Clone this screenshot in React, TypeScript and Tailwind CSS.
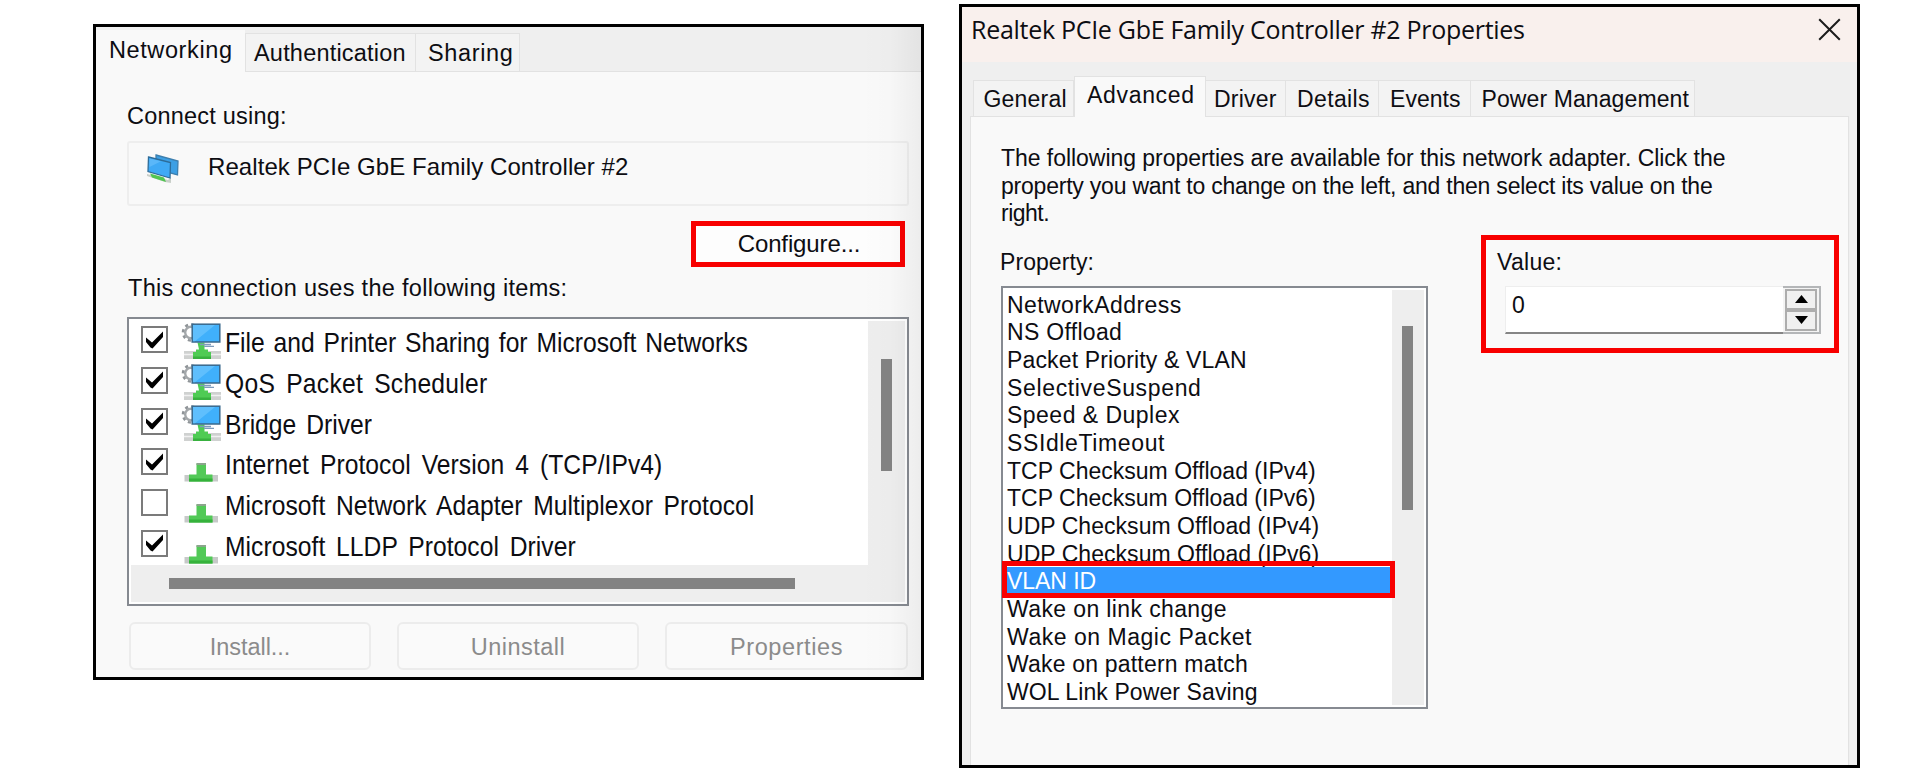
import type { ReactNode } from "react";

const items = [
  { label: "File and Printer Sharing for Microsoft Networks", checked: true, client: true, spacing: "[word-spacing:2.3px]" },
  { label: "QoS Packet Scheduler", checked: true, client: true, spacing: "tracking-[0.3px] [word-spacing:4.5px]" },
  { label: "Bridge Driver", checked: true, client: true, spacing: "[word-spacing:3.6px]" },
  { label: "Internet Protocol Version 4 (TCP/IPv4)", checked: true, client: false, spacing: "tracking-[0.05px] [word-spacing:4.7px]" },
  { label: "Microsoft Network Adapter Multiplexor Protocol", checked: false, client: false, spacing: "tracking-[0.05px] [word-spacing:4.3px]" },
  { label: "Microsoft LLDP Protocol Driver", checked: true, client: false, spacing: "tracking-[0.05px] [word-spacing:4.4px]" },
];

const properties = [
  { name: "NetworkAddress", tracking: "tracking-[0.42px]" },
  { name: "NS Offload", tracking: "tracking-[0.3px]" },
  { name: "Packet Priority & VLAN", tracking: "tracking-[0.15px]" },
  { name: "SelectiveSuspend", tracking: "tracking-[0.65px]" },
  { name: "Speed & Duplex", tracking: "tracking-[0.48px]" },
  { name: "SSIdleTimeout", tracking: "tracking-[0.62px]" },
  { name: "TCP Checksum Offload (IPv4)", tracking: "tracking-[0.01px]" },
  { name: "TCP Checksum Offload (IPv6)", tracking: "tracking-[0.01px]" },
  { name: "UDP Checksum Offload (IPv4)", tracking: "tracking-[0.04px]" },
  { name: "UDP Checksum Offload (IPv6)", tracking: "tracking-[0.04px]" },
  { name: "VLAN ID", tracking: "tracking-[-0.06px]" },
  { name: "Wake on link change", tracking: "tracking-[0.38px]" },
  { name: "Wake on Magic Packet", tracking: "tracking-[0.53px]" },
  { name: "Wake on pattern match", tracking: "tracking-[0.19px]" },
  { name: "WOL Link Power Saving", tracking: "tracking-[0.1px]" },
];

function AdapterIcon() {
  return (
    <svg width="34" height="30" viewBox="0 0 34 30" className="mt-px shrink-0">
      <path d="M10 1 L32 7 L31.500 21 L10 15Z" fill="#3c9fe4" stroke="#3d7fae" strokeWidth="1.300" />
      <path d="M1 20 L22 26 L25 23 L25 29 L19 28 L1 22Z" fill="#c9cfc9" />
      <path d="M4 19.500 L18 23.500 L20 28 L6 23.500Z" fill="#52c552" />
      <path d="M2.500 3 L24.500 8.500 L24 24 L2 17.500Z" fill="#3fa9f5" stroke="#2d6c99" strokeWidth="1.300" />
      <path d="M3.500 4.500 L15 7.300 L3.500 13Z" fill="#6cc2fb" opacity=".6" />
    </svg>
  );
}

function ClientIcon() {
  return (
    <svg width="40" height="37" viewBox="0 0 40 37" className="shrink-0">
      <g fill="none" stroke="#8f9498">
        <circle cx="10" cy="9.500" r="5.800" strokeWidth="2.400" stroke="#a4a8ab" />
        <circle cx="10" cy="9.500" r="8" strokeWidth="2.600" strokeDasharray="3.100 3.180" />
      </g>
      <rect x="3" y="28" width="37" height="8" fill="#cfd1d0" />
      <path d="M3 31.500H40" stroke="#f1f1f1" strokeWidth="1.500" />
      <path d="M16.500 19.500H23.500V26.500H27V29H30V36H12V29H15V26.500H18Z" fill="#4fcb54" />
      <path d="M12 33.500H30V36H12Z" fill="#38b13f" />
      <path d="M19 21.500H30M23 23.300H33" stroke="#7f9cbc" strokeWidth="1.300" />
      <rect x="11.200" y="1.200" width="27.600" height="17.800" fill="#40b0fb" stroke="#39688c" strokeWidth="1.500" />
      <path d="M12 2H34L14 18.200H12Z" fill="#6cc6fd" opacity=".7" />
    </svg>
  );
}

function ProtocolIcon() {
  return (
    <svg width="40" height="37" viewBox="0 0 40 37" className="shrink-0">
      <rect x="3.500" y="30" width="33.500" height="6.500" fill="#c6c9c8" />
      <path d="M15.500 18.500H25V29.500H31.500V36.500H8V29.500H15.500Z" fill="#52c957" />
      <path d="M8 33.500H31.500V36.500H8Z" fill="#35b23b" />
      <path d="M15.500 18H25V20H15.500Z" fill="#8ba58c" />
    </svg>
  );
}

function Checkbox({ checked }: { checked: boolean }) {
  return (
    <span className="mt-[7px] flex size-[27px] shrink-0 items-center justify-center border-2 border-[#7b7b7b] bg-white">
      {checked && (
        <svg width="19" height="18" viewBox="0 0 19 18">
          <path d="M1 6.500L7 11.500L18 0.500V6L7.500 17.500L5.500 16.500L1 11Z" fill="#000" />
        </svg>
      )}
    </span>
  );
}

function FooterButton({ children, className }: { children: ReactNode; className: string }) {
  return (
    <button className={"h-[48px] rounded-[6px] border-2 border-[#ececec] bg-[#fafafa] pt-[3px] text-[23.5px] text-[#8b8b8b] " + className}>
      {children}
    </button>
  );
}

function NetworkingWindow() {
  return (
    <section className="relative mt-6 ml-[93px] flex h-[656px] w-[831px] shrink-0 flex-col border-[3px] border-black bg-[#f9f9f9]">
      <div className="flex h-[45px] shrink-0 items-end bg-[#efefef] text-[23.5px]">
        <div className="h-[42px] w-[149px] shrink-0 bg-[#f9f9f9] pl-[13px] leading-[41px] tracking-[0.6px]">Networking</div>
        <div className="h-[39px] w-[171px] shrink-0 border border-[#e2e2e2] bg-[#f3f3f3] pl-2 leading-[39px] tracking-[0.2px]">Authentication</div>
        <div className="h-[39px] w-[104px] shrink-0 border border-l-0 border-[#e2e2e2] bg-[#f3f3f3] pl-3 leading-[39px] tracking-[0.65px]">Sharing</div>
        <div className="h-[39px] grow border-b border-[#e2e2e2]" />
      </div>

      <div className="flex flex-col pt-[30px] pl-8 text-[23.5px]">
        <p className="-ml-px h-7 leading-7 tracking-[0.21px]">Connect using:</p>
        <div className="-ml-px mt-[11px] flex h-[65px] w-[782px] rounded-[3px] border-2 border-[#eeeeee] pt-[10px] pl-[17px]">
          <AdapterIcon />
          <span className="ml-7 text-[24px] leading-7 tracking-[0.08px]">Realtek PCIe GbE Family Controller #2</span>
        </div>
        <button className="mt-[15px] ml-[563px] h-[46px] w-[214px] border-[5px] border-[#f80000] bg-[#fdfdfd] pl-0.5 text-[24px] leading-9 tracking-[-0.13px]">
          Configure...
        </button>
        <p className="mt-[7px] h-7 leading-7 tracking-[0.3px]">This connection uses the following items:</p>

        <div className="-ml-px mt-[15px] flex h-[289px] w-[782px] flex-col border-2 border-[#868a91] bg-white">
          <div className="flex h-[246px]">
            <ul className="w-[739px] overflow-hidden">
              {items.map((item) => (
                <li key={item.label} className="flex h-[40.8px] items-start pl-3">
                  <Checkbox checked={item.checked} />
                  <span className="mt-1 ml-[13px] flex shrink-0">{item.client ? <ClientIcon /> : <ProtocolIcon />}</span>
                  <span className={"ml-1 origin-left scale-x-[0.88] text-[28px] leading-[47px] whitespace-nowrap " + item.spacing}>
                    {item.label}
                  </span>
                </li>
              ))}
            </ul>
            <div className="mt-0.5 w-[37px] bg-[#eeeeee] pt-[38px] pl-[13px]">
              <div className="h-28 w-[11px] bg-[#838383]" />
            </div>
          </div>
          <div className="mx-0.5 h-[37px] bg-[#eeeeee] pt-[13px] pl-[38px]">
            <div className="h-[11px] w-[626px] bg-[#838383]" />
          </div>
        </div>

        <div className="mt-4 ml-px flex">
          <FooterButton className="w-[242px] tracking-[-0.04px]">Install...</FooterButton>
          <FooterButton className="ml-[26px] w-[242px] tracking-[0.5px]">Uninstall</FooterButton>
          <FooterButton className="ml-[26px] w-[243px] tracking-[0.6px]">Properties</FooterButton>
        </div>
      </div>
      <div className="pointer-events-none absolute inset-y-0 right-0 w-[60px] bg-linear-to-r from-black/0 via-black/[0.01] to-black/[0.05]" />
    </section>
  );
}

function PropertiesWindow() {
  return (
    <section className="mt-1 ml-[35px] flex h-[764px] w-[901px] shrink-0 flex-col border-[3px] border-black bg-[#efefef]">
      <header className="flex h-[55px] shrink-0 items-start justify-between bg-[#f9f0ed] pr-4 pl-[9px]">
        <h1 className="font-['Open_Sans'] text-[25px] leading-[45px] tracking-[-0.29px]">Realtek PCIe GbE Family Controller #2 Properties</h1>
        <svg width="23" height="23" viewBox="0 0 23 23" className="mt-[11px]">
          <path d="M1.200 1.200L21.800 21.800M21.800 1.200L1.200 21.800" stroke="#1c1c1c" strokeWidth="2" fill="none" />
        </svg>
      </header>

      <div className="flex h-[54px] shrink-0 items-end pl-[11px] leading-[37px]">
        <div className="h-9 w-[101px] shrink-0 border border-b-0 border-[#e2e2e2] bg-[#f3f3f3] pl-[9.5px] tracking-[0.2px]">General</div>
        <div className="relative -mb-px h-[41px] w-[132px] shrink-0 border border-b-0 border-[#e2e2e2] bg-[#f9f9f9] pl-3 tracking-[0.68px]">Advanced</div>
        <div className="h-9 w-[80px] shrink-0 border border-b-0 border-l-0 border-[#e2e2e2] bg-[#f3f3f3] pl-2 tracking-[0.2px]">Driver</div>
        <div className="h-9 w-[93px] shrink-0 border border-b-0 border-l-0 border-[#e2e2e2] bg-[#f3f3f3] pl-[11px] tracking-[0.37px]">Details</div>
        <div className="h-9 w-[92px] shrink-0 border border-b-0 border-l-0 border-[#e2e2e2] bg-[#f3f3f3] pl-[11px] tracking-[0.04px]">Events</div>
        <div className="h-9 w-[224px] shrink-0 border border-b-0 border-l-0 border-[#e2e2e2] bg-[#f3f3f3] pl-[10.5px] tracking-[0.1px]">Power Management</div>
      </div>

      <div className="ml-2 w-[879px] grow border border-b-0 border-[#e2e2e2] bg-[#f9f9f9] pt-7 pl-[30px]">
        <div className="leading-[27.6px] whitespace-nowrap">
          <p className="tracking-[-0.04px]">The following properties are available for this network adapter. Click the</p>
          <p className="tracking-[-0.22px]">property you want to change on the left, and then select its value on the</p>
          <p className="tracking-[-0.5px]">right.</p>
        </div>

        <div className="mt-[7px] flex items-start">
          <div className="w-[427px] pt-[13px]">
            <p className="-ml-px h-7 leading-7 tracking-[0.07px]">Property:</p>
            <div className="mt-[10px] flex h-[423px] border-2 border-[#868a91] bg-white">
              <ul className="w-[389px] pt-[3px] leading-[28px] whitespace-nowrap">
                {properties.map(({ name, tracking }) =>
                  name === "VLAN ID" ? (
                    <li key={name} className={"relative h-[27.66px] bg-[#3399ff] pl-1 text-white " + tracking}>
                      {name}
                      <span className="absolute -top-[6.6px] -left-px h-[37px] w-[393px] border-[5px] border-[#f80000]" />
                    </li>
                  ) : (
                    <li key={name} className={"h-[27.66px] pl-1 " + tracking}>{name}</li>
                  ),
                )}
              </ul>
              <div className="my-0.5 w-8 bg-[#eeeeee] pt-[36px] pl-[10px]">
                <div className="h-[184px] w-[11px] bg-[#838383]" />
              </div>
            </div>
          </div>

          <div className="ml-[53px] h-[118px] w-[358px] border-[5px] border-[#f80000] pt-2 pl-[11px]">
            <p className="h-7 leading-7 tracking-[0.3px]">Value:</p>
            <div className="mt-[10px] ml-[8px] flex h-12 w-[316px]">
              <div className="w-[278px] border-t border-b-2 border-l border-t-[#eeeeee] border-b-[#858585] border-l-[#eeeeee] bg-white pl-[6px] leading-[36px]">0</div>
              <div className="flex w-[38px] flex-col border-2 border-l-0 border-[#b4b6b8] bg-[#f4f4f4] py-px pr-0.5 pl-[2px]">
                <div className="flex h-[21px] items-center justify-center border-2 border-[#adadad] bg-[#f0f0f0]">
                  <svg width="13" height="8" viewBox="0 0 13 8"><path d="M6.500 0L13 8H0Z" fill="#000" /></svg>
                </div>
                <div className="flex h-[21px] items-center justify-center border-2 border-[#adadad] bg-[#f0f0f0]">
                  <svg width="13" height="8" viewBox="0 0 13 8"><path d="M0 0H13L6.500 8Z" fill="#000" /></svg>
                </div>
              </div>
            </div>
          </div>
        </div>
      </div>
    </section>
  );
}

export default function App() {
  return (
    <main className="flex h-[773px] w-[1912px] items-start overflow-hidden bg-white font-['Liberation_Sans',Arial,sans-serif] text-[23px] text-[#0d0d12]">
      <NetworkingWindow />
      <PropertiesWindow />
    </main>
  );
}
